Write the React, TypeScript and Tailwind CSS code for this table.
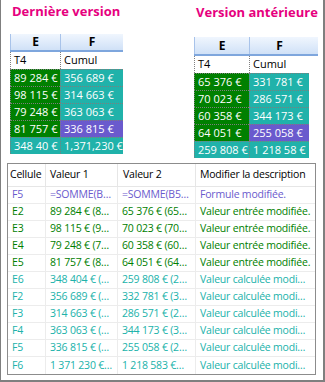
import React from "react";

type Cell = { text: string; bg: string; color?: string };

const G = "bg-[#008000]";
const T = "bg-[#20b2aa]";
const P = "bg-[#6a5acd]";

function TopTable({
  rows,
  w1,
  w2,
  headerH,
}: {
  rows: [Cell, Cell][];
  w1: string;
  w2: string;
  headerH: string;
}) {
  return (
    <div className="flex flex-col">
      <div
        className={`flex ${headerH} bg-linear-to-b from-[#f0f6fe] to-[#d0e1f7] border-b-2 border-[#7ea6dd] text-[12px] font-bold text-black`}
      >
        <div className={`${w1} flex items-center justify-center border-l border-[#a8c3ea]`}>E</div>
        <div className={`${w2} flex items-center justify-center border-l border-[#a8c3ea]`}>F</div>
      </div>
      <div className="flex h-[17px] text-[11px] text-black">
        <div className={`${w1} flex items-center pl-[3px] border-l border-dotted border-[#808080]`}>T4</div>
        <div className={`${w2} flex items-center pl-[3px] border-l border-dotted border-[#808080]`}>Cumul</div>
      </div>
      {rows.map((r, i) => (
        <div key={i} className="flex h-[17px] text-[11px] text-white">
          <div
            className={`${w1} ${r[0].bg} flex items-center pl-[3px] border-l border-t border-dotted border-[#7d7d7d] whitespace-nowrap`}
          >
            {r[0].text}
          </div>
          <div
            className={`${w2} ${r[1].bg} flex items-center pl-[3px] border-l border-t border-dotted border-[#7d7d7d] whitespace-nowrap`}
          >
            {r[1].text}
          </div>
        </div>
      ))}
    </div>
  );
}

const leftRows: [Cell, Cell][] = [
  [{ text: "89 284 €", bg: G }, { text: "356 689 €", bg: T }],
  [{ text: "98 115 €", bg: G }, { text: "314 663 €", bg: T }],
  [{ text: "79 248 €", bg: G }, { text: "363 063 €", bg: T }],
  [{ text: "81 757 €", bg: G }, { text: "336 815 €", bg: P }],
  [{ text: "348 40 €", bg: T }, { text: "1,371,230 €", bg: T }],
];

const rightRows: [Cell, Cell][] = [
  [{ text: "65 376 €", bg: G }, { text: "331 781 €", bg: T }],
  [{ text: "70 023 €", bg: G }, { text: "286 571 €", bg: T }],
  [{ text: "60 358 €", bg: G }, { text: "344 173 €", bg: T }],
  [{ text: "64 051 €", bg: G }, { text: "255 058 €", bg: P }],
  [{ text: "259 808 €", bg: T }, { text: "1 218 58 €", bg: T }],
];

type Row = { c: string; v1: string; v2: string; d: string; color: string };

const PUR = "text-[#6a5acd]";
const GRN = "text-[#008000]";
const TEA = "text-[#20b2aa]";

const bottomRows: Row[] = [
  { c: "F5", v1: "=SOMME(B…", v2: "=SOMME(B5…", d: "Formule modifiée.", color: PUR },
  { c: "E2", v1: "89 284 € (8…", v2: "65 376 € (65…", d: "Valeur entrée modifiée.", color: GRN },
  { c: "E3", v1: "98 115 € (9…", v2: "70 023 € (70…", d: "Valeur entrée modifiée.", color: GRN },
  { c: "E4", v1: "79 248 € (7…", v2: "60 358 € (60…", d: "Valeur entrée modifiée.", color: GRN },
  { c: "E5", v1: "81 757 € (8…", v2: "64 051 € (64…", d: "Valeur entrée modifiée.", color: GRN },
  { c: "E6", v1: "348 404 € (…", v2: "259 808 € (2…", d: "Valeur calculée modi…", color: TEA },
  { c: "F2", v1: "356 689 € (…", v2: "332 781 € (3…", d: "Valeur calculée modi…", color: TEA },
  { c: "F3", v1: "314 663 € (…", v2: "286 571 € (2…", d: "Valeur calculée modi…", color: TEA },
  { c: "F4", v1: "363 063 € (…", v2: "344 173 € (3…", d: "Valeur calculée modi…", color: TEA },
  { c: "F5", v1: "336 815 € (…", v2: "255 058 € (2…", d: "Valeur calculée modi…", color: TEA },
  { c: "F6", v1: "1 371 230 €…", v2: "1 218 583 €…", d: "Valeur calculée modi…", color: TEA },
];

export default function App() {
  return (
    <div
      className="w-[325px] h-[382px] bg-white border-l border-r-2 border-b-2 border-[#7f7f7f] overflow-hidden"
      style={{ fontFamily: '"Open Sans", "Noto Sans", sans-serif' }}
    >
      <div className="flex items-start h-[163px]">
        <div className="w-[122px] pl-[9px] flex flex-col">
          <div className="pt-[3px] pl-[2px] h-[34px] text-[13px] leading-[16px] font-bold text-[#e6007e] whitespace-nowrap">
            Dernière version
          </div>
          <TopTable rows={leftRows} w1="w-[50px]" w2="w-[63px]" headerH="h-[18px]" />
        </div>
        <div className="ml-[71px] flex flex-col">
          <div className="pt-[4px] pl-[2px] h-[37px] text-[13px] leading-[16px] font-bold text-[#e6007e] whitespace-nowrap">
            Version antérieure
          </div>
          <TopTable rows={rightRows} w1="w-[55px]" w2="w-[60px]" headerH="h-[19px]" />
        </div>
      </div>
      <div className="ml-[6px] w-[309px] border border-[#8c8c8c] text-[10.5px] tracking-[-0.2px]">
        <div className="grid grid-cols-[38px_72px_78px_1fr] h-[23px] border-b border-[#e6e6e6] text-black">
          <div className="flex items-center pl-[2px] border-r border-[#e6e6e6]">Cellule</div>
          <div className="flex items-center pl-[4px] border-r border-[#e6e6e6]">Valeur 1</div>
          <div className="flex items-center pl-[5px] border-r border-[#e6e6e6]">Valeur 2</div>
          <div className="flex items-center pl-[4px]">Modifier la description</div>
        </div>
        {bottomRows.map((r, i) => (
          <div
            key={i}
            className={`grid grid-cols-[38px_72px_78px_1fr] h-[17px] ${
              i < bottomRows.length - 1 ? "border-b border-[#ececec]" : ""
            } ${r.color}`}
          >
            <div className="flex items-center pl-[4px] border-r border-[#ececec] whitespace-nowrap overflow-hidden">
              {r.c}
            </div>
            <div className="flex items-center pl-[4px] border-r border-[#ececec] whitespace-nowrap overflow-hidden">
              {r.v1}
            </div>
            <div className="flex items-center pl-[4px] border-r border-[#ececec] whitespace-nowrap overflow-hidden">
              {r.v2}
            </div>
            <div className="flex items-center pl-[4px] whitespace-nowrap overflow-hidden">{r.d}</div>
          </div>
        ))}
      </div>
    </div>
  );
}
